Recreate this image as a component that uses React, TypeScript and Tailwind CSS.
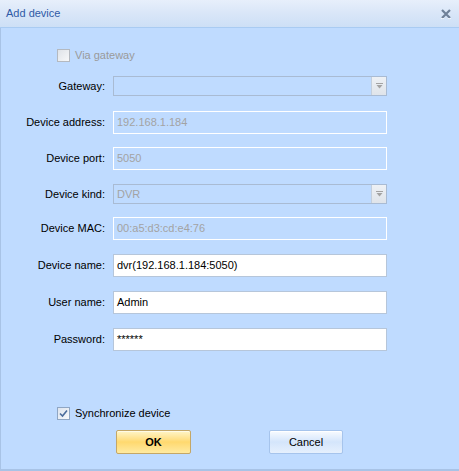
import React from "react";

const font = { fontFamily: '"Liberation Sans", Arial, sans-serif' };

type FieldProps = {
  label: string;
  value?: string;
  kind: "text" | "disabled" | "combo";
  top: string;
};

const DropArrow = () => (
  <div className="flex h-full w-[15px] items-center justify-center border-l border-[#c3cfdd] bg-gradient-to-b from-[#eef1f5] to-[#dfe4ea]">
    <svg width="7" height="6" viewBox="0 0 7 6">
      <rect x="0" y="0" width="7" height="1" fill="#a3a3a3" />
      <path d="M0.5 2 L6.5 2 L3.5 5.5 Z" fill="#a3a3a3" />
    </svg>
  </div>
);

const Field: React.FC<FieldProps> = ({ label, value, kind, top }) => {
  return (
    <div className={`flex items-center ${top}`}>
      <div className="w-[105px] pr-[1px] text-right text-[11px] text-black">{label}</div>
      <div className="ml-[7px] w-[274px]">
        {kind === "combo" && (
          <div className="flex h-[20px] items-center border border-[#a9bbd3] bg-[#bfdbff]">
            <div className="flex-1 pl-[3px] text-[11px] text-[#a3a3a3]">{value}</div>
            <DropArrow />
          </div>
        )}
        {kind === "disabled" && (
          <div className="flex h-[23px] items-center border border-white bg-[#bfdbff] pl-[3px] text-[11px] text-[#a3a3a3]">
            {value}
          </div>
        )}
        {kind === "text" && (
          <div className="flex h-[23px] items-center border border-[#b6c6da] bg-white pl-[3px] text-[11px] text-black">
            {value}
          </div>
        )}
      </div>
    </div>
  );
};

export default function App() {
  return (
    <div className="h-[471px] w-[459px] overflow-hidden bg-[#bfdbff]" style={font}>
      {/* title bar */}
      <div className="flex h-[28px] items-center justify-between border-b border-[#a9cbf2] bg-gradient-to-b from-[#e7effb] via-[#d9e6f8] to-[#cddff6] pl-[6px] pr-[8px]">
        <span className="text-[11px] text-[#2f5aa6]">Add device</span>
        <svg width="10" height="10" viewBox="0 0 10 10" className="mt-[1px]">
          <path d="M1 1 L9 9 M9 1 L1 9" stroke="#6f8098" strokeWidth="2.2" />
          <path d="M0 9.6 L3 9.6 M7 9.6 L10 9.6" stroke="#ffffff" strokeWidth="0.8" />
        </svg>
      </div>

      {/* body */}
      <div className="flex h-[443px] flex-col border-b-2 border-l border-[#a8c3e6]">
        <div className="ml-[56px] mt-[21px] flex h-[13px] items-center leading-[13px]">
          <div className="h-[13px] w-[13px] border border-[#b4b9c0] bg-gradient-to-br from-[#dfe3e8] to-[#f7f8f9]" />
          <span className="ml-[5px] text-[11px] text-[#9a9a9a]">Via gateway</span>
        </div>

        <Field label="Gateway:" kind="combo" top="mt-[14px]" />
        <Field label="Device address:" value="192.168.1.184" kind="disabled" top="mt-[15px]" />
        <Field label="Device port:" value="5050" kind="disabled" top="mt-[13px]" />
        <Field label="Device kind:" value="DVR" kind="combo" top="mt-[14px]" />
        <Field label="Device MAC:" value="00:a5:d3:cd:e4:76" kind="disabled" top="mt-[13px]" />
        <Field label="Device name:" value="dvr(192.168.1.184:5050)" kind="text" top="mt-[14px]" />
        <Field label="User name:" value="Admin" kind="text" top="mt-[14px]" />
        <Field label="Password:" value="******" kind="text" top="mt-[14px]" />

        <div className="ml-[56px] mt-[56px] flex h-[13px] items-center leading-[13px]">
          <div className="flex h-[13px] w-[13px] items-center justify-center border border-[#8fa6c4] bg-gradient-to-br from-[#dde4ee] to-[#f7f9fc]">
            <svg width="9" height="9" viewBox="0 0 9 9">
              <path d="M1 4.5 L3.5 7 L8 1.5" stroke="#4b6c9c" strokeWidth="1.6" fill="none" />
            </svg>
          </div>
          <span className="ml-[5px] text-[11px] text-black">Synchronize device</span>
        </div>

        <div className="mt-[10px] flex items-start">
          <button className="ml-[115px] flex h-[24px] w-[75px] items-center justify-center rounded-[2px] border border-[#c4a767] bg-gradient-to-b from-[#fff5c8] via-[#ffd96e] to-[#ffeaa0] text-[11px] font-bold text-black shadow-[inset_0_1px_0_#fffbe6]">
            OK
          </button>
          <button className="ml-[78px] flex h-[24px] w-[74px] items-center justify-center rounded-[2px] border border-[#a6c4ec] bg-gradient-to-b from-[#f8fbff] via-[#d4e5fb] to-[#e6f0fd] text-[11px] text-black shadow-[inset_0_1px_0_#ffffff]">
            Cancel
          </button>
        </div>
      </div>
    </div>
  );
}
